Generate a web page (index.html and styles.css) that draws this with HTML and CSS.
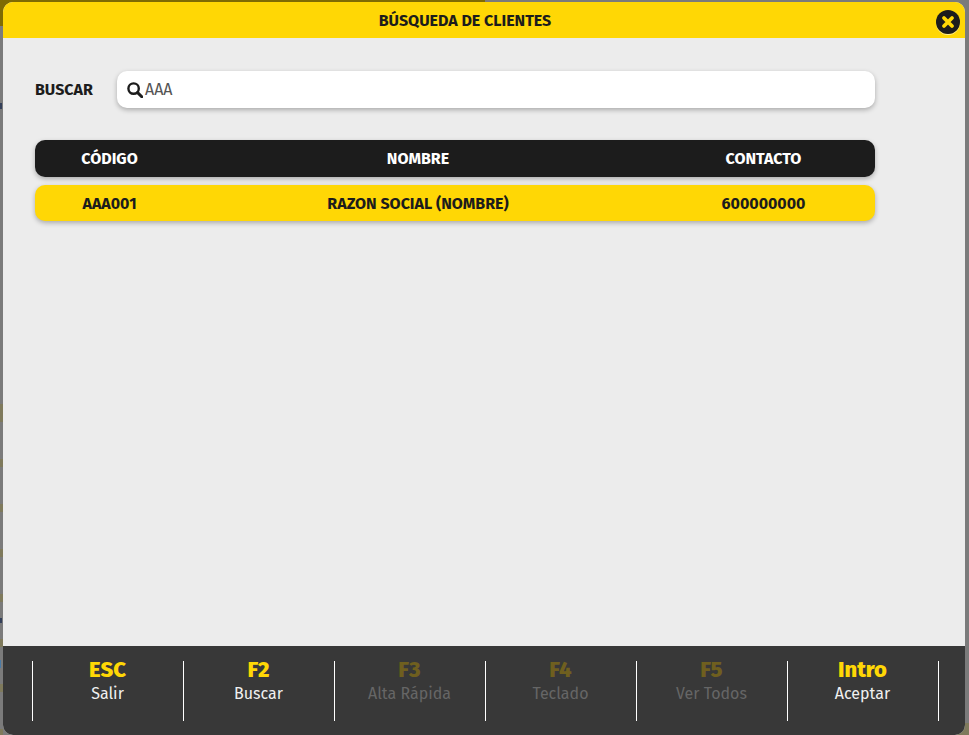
FILE: index.html
```
<!DOCTYPE html>
<html lang="es">
<head>
<meta charset="utf-8">
<title>Búsqueda de clientes</title>
<link rel="stylesheet" href="styles.css">
</head>
<body>
<div class="backdrop"><div class="backdrop-bar"></div></div>
<main class="modal">
  <header class="modal-header">
    <h1 class="modal-title">BÚSQUEDA DE CLIENTES</h1>
    <button class="close" aria-label="Cerrar">
      <svg viewBox="0 0 24 24" width="24" height="24"><circle cx="12" cy="12" r="12" fill="#1c1c1c"/><path d="M8 8l8 8M16 8l-8 8" stroke="#ffd705" stroke-width="3.8" stroke-linecap="round"/></svg>
    </button>
  </header>
  <section class="modal-body">
    <div class="search-row">
      <label class="search-label">BUSCAR</label>
      <div class="search-box">
        <svg class="search-icon" viewBox="0 0 16 16" width="16" height="16"><circle cx="6.6" cy="6.6" r="5.2" fill="none" stroke="#1c1c1c" stroke-width="2.4"/><path d="M10.6 10.6l4.2 4.2" stroke="#1c1c1c" stroke-width="3" stroke-linecap="round"/></svg>
        <span class="search-value">AAA</span>
      </div>
    </div>
    <div class="row row-head"><span class="c1">CÓDIGO</span><span class="c2">NOMBRE</span><span class="c3">CONTACTO</span></div>
    <div class="row row-item"><span class="c1">AAA001</span><span class="c2">RAZON SOCIAL (NOMBRE)</span><span class="c3">600000000</span></div>
  </section>
  <footer class="modal-footer">
    <div class="key"><b>ESC</b><span>Salir</span></div>
    <div class="key"><b>F2</b><span>Buscar</span></div>
    <div class="key off"><b>F3</b><span>Alta Rápida</span></div>
    <div class="key off"><b>F4</b><span>Teclado</span></div>
    <div class="key off"><b>F5</b><span>Ver Todos</span></div>
    <div class="key"><b>Intro</b><span>Aceptar</span></div>
  </footer>
</main>
</body>
</html>
```
FILE: styles.css
```
* { box-sizing: border-box; }
html, body { margin: 0; height: 100%; overflow: hidden; }
body { font-family: "Fira Sans", "Noto Sans", "Liberation Sans", sans-serif; background: #7b7b7b; }
.backdrop {
  position: absolute; inset: 0;
  background:
    linear-gradient(#7f7a5c, #7f7a5c) 0 404px / 3px 18px no-repeat,
    repeating-linear-gradient(#7f7a5c 0 8px, transparent 8px 45px) 0 459px / 3px 276px no-repeat,
    linear-gradient(#34405a, #34405a) 0 103px / 2px 6px no-repeat,
    linear-gradient(#34405a, #34405a) 0 618px / 2px 5px no-repeat,
    linear-gradient(#4a7aa5, #4a7aa5) 0 660px / 1px 8px no-repeat,
    linear-gradient(#7f7a5c, #7f7a5c) 100% 100% / 14px 12px no-repeat;
}
.backdrop-bar { width: 485px; height: 26px; background: #7f6b03; }
.modal { position: absolute; left: 3px; top: 2px; width: 962px; height: 733px; display: flex; flex-direction: column; border-radius: 10px; overflow: hidden; background: #ececec; }
.modal-header { height: 36px; flex: none; background: #ffd705; display: flex; align-items: center; justify-content: center; padding-right: 38px; position: relative; }
.modal-title { margin: 0; font-size: 16px; font-weight: 700; color: #1c1c1c; }
.close { position: absolute; right: 5px; top: 8px; width: 24px; height: 24px; padding: 0; border: 0; border-radius: 50%; background: none; box-shadow: 0 1px 0 rgba(255,255,255,.6); display: block; }
.close svg { display: block; }
.modal-body { flex: 1; padding: 33px 90px 0 32px; }
.search-row { display: flex; align-items: center; height: 37px; margin-bottom: 32px; }
.search-label { width: 82px; font-size: 16px; font-weight: 700; color: #1c1c1c; margin-top: -1px; }
.search-box { flex: 1; height: 37px; background: #fff; border-radius: 10px; box-shadow: 0 2px 5px rgba(0,0,0,.28); display: flex; align-items: center; padding-left: 10px; gap: 2px; }
.search-value { font-size: 16px; color: #555; }
.row { display: grid; grid-template-columns: 149px 468px 1fr; align-items: center; height: 37px; border-radius: 10px; box-shadow: 0 2px 5px rgba(0,0,0,.28); font-size: 16px; font-weight: 700; text-align: center; margin-bottom: 8px; }
.row-head { background: #1c1c1c; color: #fff; }
.row-item { background: #ffd705; color: #1c1c1c; height: 36px; }
.modal-footer { height: 89px; flex: none; background: #383838; display: flex; padding: 15px 26px 0 29px; align-items: flex-start; }
.key { width: 151px; height: 60px; border-left: 1px solid #fff; padding-right: 1px; display: flex; flex-direction: column; align-items: center; }
.key:last-child { width: 152px; border-right: 1px solid #fff; }
.key b { font-size: 22px; font-weight: 800; line-height: 20px; margin-top: -1px; color: #ffd705; }
.key span { font-size: 16px; line-height: 20px; margin-top: 4px; color: #f0f0f0; }
.key.off b { color: #6f5f1f; }
.key.off span { color: #666; }
```
